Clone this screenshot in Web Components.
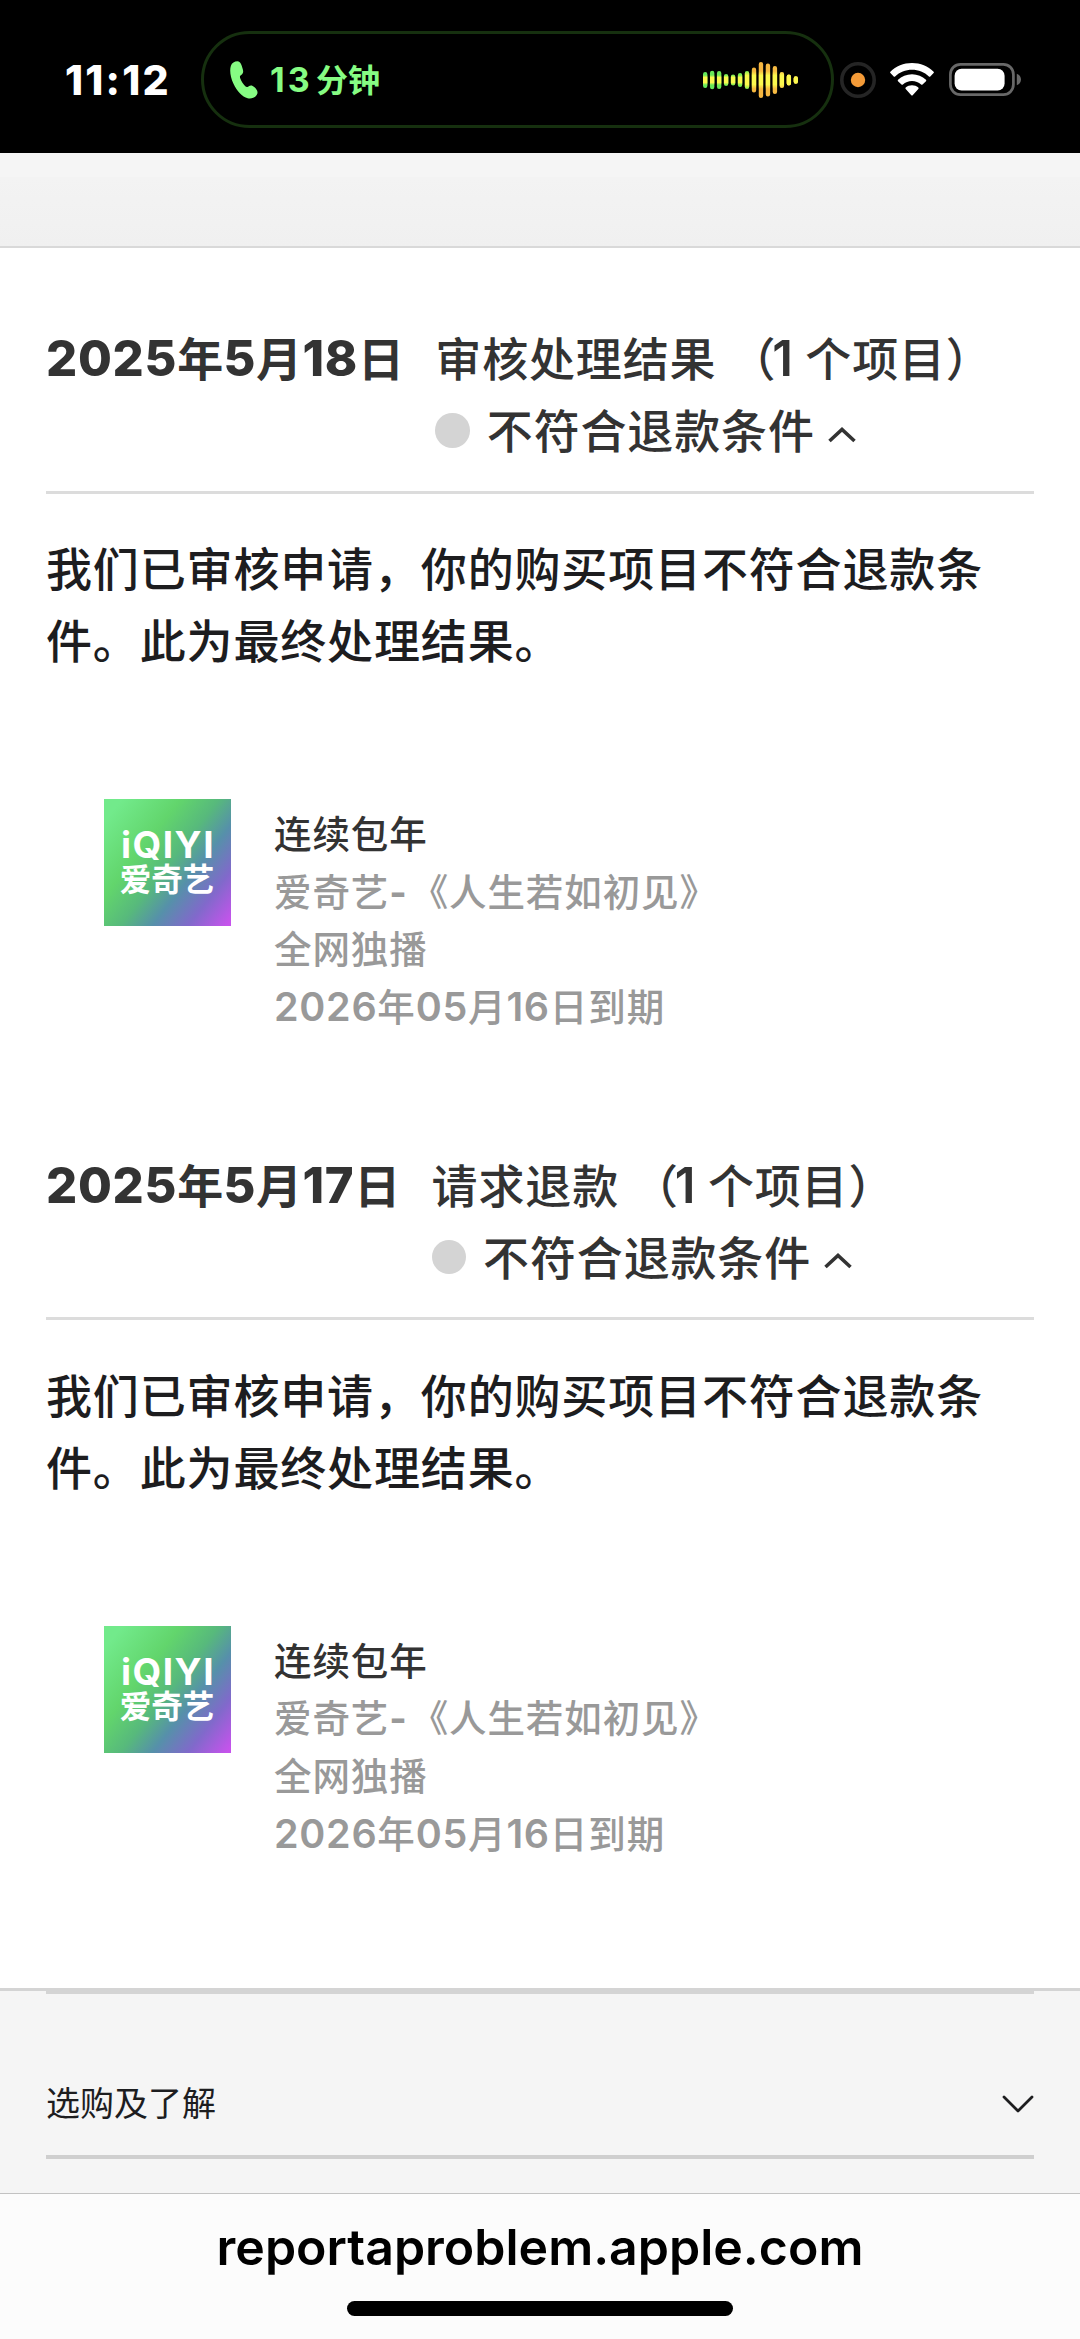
<!DOCTYPE html>
<html lang="zh-CN">
<head>
<meta charset="UTF-8">
<meta name="viewport" content="width=device-width, initial-scale=1.0">
<title>报告问题</title>
<style>
    html, body {
        margin: 0;
        padding: 0;
        background: #fff;
    }

    body {
        width: 1080px;
        height: 2339px;
        overflow: hidden;
        display: flex;
        flex-direction: column;
        font-family: Inter, "Noto Sans CJK SC", sans-serif;
    }

    main {
        flex: 1;
        display: flex;
        flex-direction: column;
        min-height: 0;
    }
</style>
</head>
<body>
    <status-bar time="11:12"><call-island number="13" unit="分钟"></call-island></status-bar>
    <main>
        <top-band></top-band>
        <claim-section date="2025年5月18日" heading="审核处理结果" status="不符合退款条件">
            我们已审核申请，你的购买项目不符合退款条件。此为最终处理结果。
            <product-item slot="product" name="连续包年" expiry="2026年05月16日到期"></product-item>
        </claim-section>
        <claim-section date="2025年5月17日" heading="请求退款" status="不符合退款条件">
            我们已审核申请，你的购买项目不符合退款条件。此为最终处理结果。
            <product-item slot="product" name="连续包年" expiry="2026年05月16日到期"></product-item>
        </claim-section>
        <page-footer>选购及了解</page-footer>
    </main>
    <url-bar>reportaproblem.apple.com</url-bar>

<script>
class StatusBar extends HTMLElement {
    constructor() {
        super();
        const shadow = this.attachShadow({ mode: 'open' });
        shadow.innerHTML = `
            <style>
                :host {
                    display: flex;
                    align-items: center;
                    box-sizing: border-box;
                    height: 152.5px;
                    padding: 7px 59px 0 65px;
                    background: #000;
                    color: #fff;
                }

                .time {
                    width: 136px;
                    font-size: 41px;
                    font-weight: 800;
                    line-height: 48px;
                    letter-spacing: 2.2px;
                    white-space: nowrap;
                }

                svg {
                    display: block;
                    flex: none;
                }

                .mic {
                    margin-left: 6px;
                }

                .wifi {
                    margin-left: 14px;
                }

                .battery {
                    margin-left: 15px;
                }
            </style>
            <div class="time"></div>
            <slot></slot>
            <svg class="mic" width="36" height="36" viewBox="0 0 36 36">
                <circle cx="18" cy="18" r="16.2" fill="none" stroke="#252525" stroke-width="3.6"/>
                <circle cx="18" cy="18" r="7.2" fill="#f49b38"/>
            </svg>
            <svg class="wifi" width="44" height="33" viewBox="0 0 44 33" fill="#fff">
                <path d="M22 0C13.6 0 5.900 3.200 0.400 8.700Q-0.200 9.400 0.400 10.100L3.700 13.500Q4.400 14.100 5.100 13.500C9.600 9.200 15.500 6.800 22 6.800S34.400 9.200 38.900 13.500Q39.600 14.100 40.300 13.500L43.600 10.100Q44.200 9.400 43.600 8.700C38.100 3.200 30.400 0 22 0Z"/>
                <path d="M22 11.200C16.500 11.200 11.700 13.300 8 16.800Q7.400 17.500 8 18.200L11.500 21.500Q12.200 22.100 12.900 21.500C15.300 19.200 18.500 18 22 18S28.700 19.200 31.100 21.500Q31.800 22.100 32.500 21.500L36 18.200Q36.600 17.500 36 16.800C32.300 13.300 27.500 11.200 22 11.200Z"/>
                <path d="M22 22.200C19.600 22.200 17.400 23.100 15.700 24.500Q15 25.200 15.700 25.900L21.300 32.200Q22 32.900 22.700 32.200L28.300 25.900Q29 25.200 28.300 24.500C26.600 23.100 24.400 22.200 22 22.200Z"/>
            </svg>
            <svg class="battery" width="72" height="33" viewBox="0 0 72 33">
                <rect x="1.400" y="1.400" width="63" height="30.200" rx="10" fill="none" stroke="#686868" stroke-width="2.700"/>
                <rect x="5.600" y="5.700" width="50" height="21.800" rx="7" fill="#fff"/>
                <path d="M67.800 10.800C70.500 11.800 72 14 72 16.500S70.500 21.200 67.800 22.200Z" fill="#686868"/>
            </svg>
        `;
    }

    connectedCallback() {
        this.shadowRoot.querySelector('.time').textContent = this.getAttribute('time');
    }
}

customElements.define('status-bar', StatusBar);

class CallIsland extends HTMLElement {
    constructor() {
        super();
        const shadow = this.attachShadow({ mode: 'open' });
        // heights of the bars, left to right
        const bars = [16, 18.5, 18, 12, 11, 14, 18, 25, 36, 33, 28, 16, 11, 7.5];
        const rects = bars.map((h, i) => `<rect x="${i * 6.97}" y="${18 - h / 2}" width="4.4" height="${h}" rx="2.2"/>`).join('');
        shadow.innerHTML = `
            <style>
                :host {
                    display: flex;
                    align-items: center;
                    box-sizing: border-box;
                    width: 633px;
                    height: 97px;
                    padding: 0 32px 0 26px;
                    border: 3.500px solid #16300f;
                    border-radius: 49px;
                    color: #86fc83;
                    font-weight: 700;
                    line-height: 44px;
                    white-space: nowrap;
                }

                .number {
                    margin-left: 12px;
                    width: 46px;
                    font-size: 34px;
                    letter-spacing: 3px;
                }

                .unit {
                    flex: 1;
                    margin-top: -4px;
                    font-family: "Noto Sans CJK SC", sans-serif;
                    font-size: 32px;
                }
            </style>
            <svg width="28" height="38" viewBox="0 0 28 38" fill="#86fc83">
                <path d="M7.500 0.300C10.500 0.300 11.800 4.500 12.800 8.200C13.600 11 13.200 12.600 10.800 14.200C9.700 15 9.700 16 10.300 17.600C11.500 20.700 13.200 23.300 15.300 25.300C16.300 26.200 17.300 26.200 18.400 25.400C20.600 23.900 22.300 24.200 24.300 26.100C26.800 28.500 28.400 30.800 27 33.400C25.400 36.500 21.700 38.200 17.700 37.300C12.200 36.100 7 30.200 3.500 22.800C0.400 16.200-0.600 9.100 0.900 4.700C1.900 1.900 4.500 0.300 7.500 0.300Z"/>
            </svg>
            <span class="number"></span>
            <span class="unit"></span>
            <svg width="96" height="36" viewBox="0 0 96 36">
                <defs>
                    <linearGradient id="edge" gradientUnits="userSpaceOnUse" x1="0" y1="0" x2="96" y2="0">
                        <stop offset="0" stop-color="#62e85a"/>
                        <stop offset="0.470" stop-color="#7df04e"/>
                        <stop offset="0.520" stop-color="#f6b43e"/>
                        <stop offset="1" stop-color="#f9c348"/>
                    </linearGradient>
                    <clipPath id="bars">${rects}</clipPath>
                    <linearGradient id="core" x1="0" y1="0" x2="0" y2="1">
                        <stop offset="0" stop-color="#fbf84e" stop-opacity="0"/>
                        <stop offset="0.250" stop-color="#fbf84e"/>
                        <stop offset="0.750" stop-color="#fbf84e"/>
                        <stop offset="1" stop-color="#fbf84e" stop-opacity="0"/>
                    </linearGradient>
                </defs>
                <g clip-path="url(#bars)">
                    <rect width="96" height="36" fill="url(#edge)"/>
                    <rect y="13" width="41" height="10" fill="url(#core)"/>
                    <rect x="41" y="9" width="55" height="18" fill="url(#core)"/>
                </g>
            </svg>
        `;
    }

    connectedCallback() {
        this.shadowRoot.querySelector('.number').textContent = this.getAttribute('number');
        this.shadowRoot.querySelector('.unit').textContent = this.getAttribute('unit');
    }
}

customElements.define('call-island', CallIsland);

class TopBand extends HTMLElement {
    constructor() {
        super();
        this.attachShadow({ mode: 'open' }).innerHTML = `
            <style>
                :host {
                    display: block;
                    box-sizing: border-box;
                    height: 95.500px;
                    background: linear-gradient(#f5f5f5 0 24px, #f3f3f3 24px, #f0f0f0);
                    border-bottom: 2px solid #d9d9d9;
                }
            </style>
        `;
    }
}

customElements.define('top-band', TopBand);

class ClaimSection extends HTMLElement {
    constructor() {
        super();
        const shadow = this.attachShadow({ mode: 'open' });
        shadow.innerHTML = `
            <style>
                :host {
                    display: block;
                    box-sizing: border-box;
                    height: 826.500px;
                    padding: 75px 46px 0;
                    color: #333;
                    font-size: 46px;
                    font-weight: 500;
                    line-height: 72px;
                    letter-spacing: 0.850px;
                }

                .head {
                    display: flex;
                    box-sizing: border-box;
                    height: 170.500px;
                    border-bottom: 3px solid #dcdcdc;
                    white-space: nowrap;
                }

                .date {
                    font-weight: 700;
                    margin-right: 31px;
                    letter-spacing: 0.300px;
                }

                .num {
                    font-size: 49px;
                    letter-spacing: 0.300px;
                }

                .date .num {
                    font-weight: 800;
                    letter-spacing: 0.700px;
                }

                .title {
                    display: flex;
                }

                .count {
                    margin-left: 13px;
                }

                .count .num {
                    margin: 0 12px 0 -4px;
                    font-weight: 600;
                }

                .status {
                    display: flex;
                    align-items: center;
                }

                .dot {
                    width: 34.500px;
                    height: 34.500px;
                    margin: 0 17px 1px 0;
                    border-radius: 50%;
                    background: #d4d4d4;
                }

                .status svg {
                    margin: 7px 0 0 13px;
                }

                p {
                    margin: 39.500px 0 0;
                    color: #1d1d1f;
                }
            </style>
            <div class="head">
                <div class="date"></div>
                <div class="info">
                    <div class="title"><span class="name"></span><span class="count">（<span class="num">1</span>个项目）</span></div>
                    <div class="status">
                        <span class="dot"></span>
                        <span class="label"></span>
                        <svg width="28" height="16" viewBox="0 0 28 16">
                            <path d="M1.500 14L14 2.500L26.500 14" fill="none" stroke="#333" stroke-width="3.600"/>
                        </svg>
                    </div>
                </div>
            </div>
            <p><slot></slot></p>
            <slot name="product"></slot>
        `;
    }

    connectedCallback() {
        const root = this.shadowRoot;
        root.querySelector('.date').innerHTML = this.getAttribute('date').replace(/\d+/g, '<span class="num">$&</span>');
        root.querySelector('.name').textContent = this.getAttribute('heading');
        root.querySelector('.label').textContent = this.getAttribute('status');
    }
}

customElements.define('claim-section', ClaimSection);

class AppIcon extends HTMLElement {
    constructor() {
        super();
        const shadow = this.attachShadow({ mode: 'open' });
        shadow.innerHTML = `
            <style>
                :host {
                    display: flex;
                    flex-direction: column;
                    align-items: center;
                    flex: none;
                    box-sizing: border-box;
                    width: 127px;
                    height: 127px;
                    padding-top: 30px;
                    background: linear-gradient(128deg, #72ea8b 8%, #62d56c 34%, #57b97c 51%, #5690aa 65%, #8169cb 81%, #c653ec 98%);
                    color: #fff;
                    font-weight: 700;
                    white-space: nowrap;
                }

                .latin {
                    height: 31px;
                    margin-left: 2px;
                    font-size: 37px;
                    line-height: 31px;
                    letter-spacing: 1.500px;
                }

                .han {
                    height: 40px;
                    font-size: 31.500px;
                    line-height: 40px;
                    letter-spacing: 0;
                }
            </style>
            <div class="latin">iQIYI</div>
            <div class="han">爱奇艺</div>
        `;
    }
}

customElements.define('app-icon', AppIcon);

class ProductItem extends HTMLElement {
    constructor() {
        super();
        const shadow = this.attachShadow({ mode: 'open' });
        shadow.innerHTML = `
            <style>
                :host {
                    display: flex;
                    align-items: flex-start;
                    padding: 122px 0 0 57.500px;
                    color: #999;
                    font-size: 37.500px;
                    font-weight: 500;
                    line-height: 57.700px;
                    letter-spacing: 0.900px;
                }

                .texts {
                    margin: 7px 0 0 43.500px;
                    white-space: nowrap;
                }

                .name {
                    color: #333;
                }

                .dash {
                    margin-right: 3px;
                    font-weight: 700;
                }

                .num {
                    font-size: 39.500px;
                    font-weight: 600;
                    letter-spacing: 0.700px;
                }
            </style>
            <app-icon></app-icon>
            <div class="texts">
                <div class="name"></div>
                <div>爱奇艺<span class="dash">-</span>《人生若如初见》</div>
                <div>全网独播</div>
                <div class="expiry"></div>
            </div>
        `;
    }

    connectedCallback() {
        this.shadowRoot.querySelector('.name').textContent = this.getAttribute('name');
        this.shadowRoot.querySelector('.expiry').innerHTML = this.getAttribute('expiry').replace(/\d+/g, '<span class="num">$&</span>');
    }
}

customElements.define('product-item', ProductItem);

class PageFooter extends HTMLElement {
    constructor() {
        super();
        const shadow = this.attachShadow({ mode: 'open' });
        shadow.innerHTML = `
            <style>
                :host {
                    display: block;
                    flex: 1;
                    margin-top: 87px;
                    padding: 0 46px;
                    background: #f5f5f5;
                    border-top: 3px solid #d4d4d4;
                    color: #1d1d1f;
                }

                .row {
                    display: flex;
                    align-items: center;
                    justify-content: space-between;
                    box-sizing: border-box;
                    height: 168px;
                    padding-top: 58px;
                    border-top: 3px solid #d4d4d4;
                    border-bottom: 4px solid #cfcfcf;
                    font-size: 34px;
                    line-height: 50px;
                }
            </style>
            <div class="row">
                <span><slot></slot></span>
                <svg width="32" height="18" viewBox="0 0 32 18">
                    <path d="M2 2L16 16L30 2" fill="none" stroke="#1d1d1f" stroke-width="2.800" stroke-linecap="round" stroke-linejoin="round"/>
                </svg>
            </div>
        `;
    }
}

customElements.define('page-footer', PageFooter);

class UrlBar extends HTMLElement {
    constructor() {
        super();
        const shadow = this.attachShadow({ mode: 'open' });
        shadow.innerHTML = `
            <style>
                :host {
                    display: flex;
                    flex-direction: column;
                    align-items: center;
                    box-sizing: border-box;
                    height: 146px;
                    padding-top: 23px;
                    background: #fcfcfc;
                    border-top: 1px solid #c2c2c2;
                    color: #000;
                    font-size: 50px;
                    font-weight: 600;
                    line-height: 60px;
                    letter-spacing: 0;
                }

                .home {
                    width: 386px;
                    height: 15px;
                    margin-top: 24px;
                    border-radius: 8px;
                    background: #000;
                }
            </style>
            <span><slot></slot></span>
            <div class="home"></div>
        `;
    }
}

customElements.define('url-bar', UrlBar);
</script>
</body>
</html>
